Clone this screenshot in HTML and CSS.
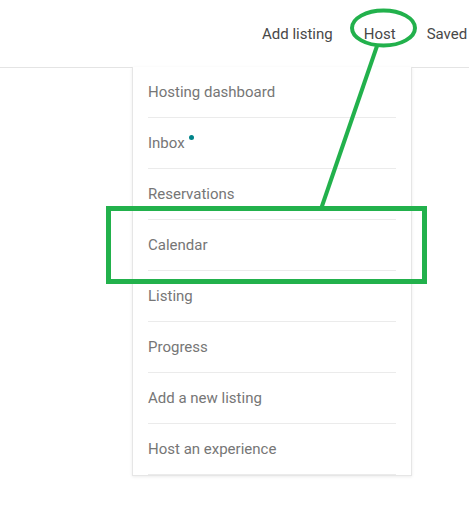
FILE: index.html
```html
<!DOCTYPE html>
<html lang="en">
<head>
<meta charset="utf-8">
<title>Host menu</title>
<link rel="stylesheet" href="styles.css">
</head>
<body>
<header class="topbar">
  <nav class="nav">
    <span class="nav-item">Add listing</span>
    <span class="nav-item">Host</span>
    <span class="nav-item">Saved</span>
  </nav>
</header>
<div class="dropdown">
  <ul class="menu">
    <li class="menu-item">Hosting dashboard</li>
    <li class="menu-item">Inbox<span class="dot"></span></li>
    <li class="menu-item">Reservations</li>
    <li class="menu-item">Calendar</li>
    <li class="menu-item">Listing</li>
    <li class="menu-item">Progress</li>
    <li class="menu-item">Add a new listing</li>
    <li class="menu-item">Host an experience</li>
  </ul>
</div>
<svg class="annotation" width="469" height="517" viewBox="0 0 469 517">
  <ellipse cx="383.5" cy="28" rx="31.5" ry="17.5" fill="none" stroke="#22b14c" stroke-width="4"/>
  <line x1="377" y1="46" x2="321" y2="209" stroke="#22b14c" stroke-width="4"/>
  <rect x="108.5" y="208.5" width="316" height="73" fill="none" stroke="#22b14c" stroke-width="5"/>
</svg>
</body>
</html>
```
FILE: styles.css
```css
html, body {
  margin: 0;
  padding: 0;
  background: #ffffff;
}
body {
  position: relative;
  width: 469px;
  height: 517px;
  overflow: hidden;
  font-family: Roboto, "Liberation Sans", sans-serif;
}
.topbar {
  height: 67px;
  border-bottom: 1px solid #e4e4e4;
  box-sizing: content-box;
  display: flex;
  align-items: center;
  padding-left: 262px;
  overflow: hidden;
  white-space: nowrap;
}
.nav {
  display: flex;
  gap: 31px;
}
.nav-item {
  font-size: 15px;
  color: #484848;
}
.dropdown {
  margin-top: -1px;
  margin-left: 132px;
  width: 278px;
  background: #ffffff;
  border: 1px solid #e6e6e6;
  border-top: none;
  box-shadow: 0 1px 3px rgba(0, 0, 0, 0.08);
}
.menu {
  list-style: none;
  margin: 0;
  padding: 0 15px;
}
.menu-item {
  height: 50px;
  border-bottom: 1px solid #ebebeb;
  display: flex;
  align-items: center;
  font-size: 15px;
  color: #767676;
}
.dot {
  width: 5px;
  height: 5px;
  border-radius: 50%;
  background: #008489;
  margin-left: 4px;
  transform: translateY(-6px);
}
.annotation {
  position: absolute;
  left: 0;
  top: 0;
  pointer-events: none;
}
```
